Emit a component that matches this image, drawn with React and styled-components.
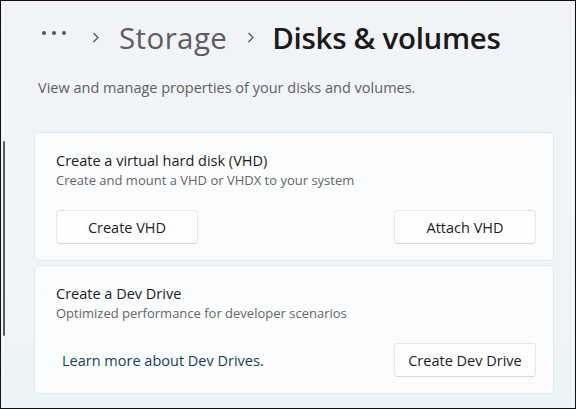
import React from "react";
import styled, { createGlobalStyle } from "styled-components";

const GlobalStyle = createGlobalStyle`
  html, body {
    margin: 0;
    padding: 0;
    background: #f0f3f9;
  }
  * {
    box-sizing: border-box;
  }
`;

const Window = styled.div`
  position: relative;
  width: 576px;
  height: 409px;
  border: 1px solid #111;
  overflow: hidden;
  background: linear-gradient(180deg, #f1f3f8 0%, #f0f4f8 75%, #ecf5f5 100%);
  font-family: "Segoe UI", "Open Sans", "Noto Sans", sans-serif;
  padding: 14px 21px 0 33px;
`;

// 왼쪽 스크롤바
const ScrollThumb = styled.div`
  position: absolute;
  left: 2px;
  top: 140px;
  width: 2px;
  height: 195px;
  border-radius: 1px;
  background: #5c5c5c;
`;

const Breadcrumb = styled.nav`
  display: flex;
  align-items: center;
  height: 44px;
  padding-left: 8px;
`;

const Dots = styled.span`
  display: flex;
  gap: 6px;
  margin-right: 26px;
  margin-top: -8px;
  span {
    width: 4px;
    height: 4px;
    border-radius: 50%;
    background: #555;
  }
`;

const Chevron = styled.svg`
  width: 7px;
  height: 11px;
  margin: 0 ${(p) => p.gap || 20}px 0 0;
  flex: none;
`;

const Crumb = styled.span`
  font-size: 29.5px;
  font-weight: ${(p) => (p.current ? 600 : 500)};
  color: ${(p) => (p.current ? "#1a1a1a" : "#5d5d5d")};
  letter-spacing: ${(p) => (p.current ? "-0.3px" : "0.4px")};
  margin-right: ${(p) => (p.current ? 0 : "20px")};
  white-space: nowrap;
`;

const Description = styled.p`
  margin: 19px 0 0 4px;
  font-size: 14.5px;
  line-height: 20px;
  color: #5f5f5f;
`;

const Cards = styled.div`
  display: flex;
  flex-direction: column;
  gap: 4px;
  margin-top: 34px;
`;

const Card = styled.section`
  background: #fbfcfd;
  border: 1px solid #e3e6ea;
  border-radius: 5px;
  padding: 18px 17px 16px 21px;
`;

const CardTitle = styled.div`
  font-size: 14.5px;
  line-height: 20px;
  color: #1b1b1b;
`;

const CardSub = styled.div`
  font-size: 13px;
  line-height: 16px;
  color: #666;
  margin-top: 1px;
`;

const ActionRow = styled.div`
  display: flex;
  align-items: center;
  justify-content: space-between;
  margin-top: 22px;
`;

const Button = styled.button`
  width: 142px;
  height: 34px;
  background: #fefefe;
  border: 1px solid #e4e6e9;
  border-bottom-color: #d4d6d9;
  border-radius: 4px;
  font-family: inherit;
  font-size: 14.5px;
  color: #1b1b1b;
  padding: 0;
  cursor: pointer;
`;

const Link = styled.a`
  font-size: 14.5px;
  color: #173f54;
  text-decoration: none;
  margin-left: 6px;
`;

const ChevronIcon = ({ gap }) => (
  <Chevron viewBox="0 0 7 11" gap={gap}>
    <path d="M1.5 1 L6 5.5 L1.5 10" fill="none" stroke="#555" strokeWidth="1.3" />
  </Chevron>
);

function App() {
  return (
    <Window>
      <GlobalStyle />
      <ScrollThumb />
      <Breadcrumb>
        <Dots>
          <span />
          <span />
          <span />
        </Dots>
        <ChevronIcon gap={20} />
        <Crumb>Storage</Crumb>
        <ChevronIcon gap={18} />
        <Crumb current>Disks &amp; volumes</Crumb>
      </Breadcrumb>

      <Description>View and manage properties of your disks and volumes.</Description>

      <Cards>
        <Card>
          <CardTitle>Create a virtual hard disk (VHD)</CardTitle>
          <CardSub>Create and mount a VHD or VHDX to your system</CardSub>
          <ActionRow>
            <Button>Create VHD</Button>
            <Button>Attach VHD</Button>
          </ActionRow>
        </Card>
        <Card>
          <CardTitle>Create a Dev Drive</CardTitle>
          <CardSub>Optimized performance for developer scenarios</CardSub>
          <ActionRow>
            <Link href="#">Learn more about Dev Drives.</Link>
            <Button>Create Dev Drive</Button>
          </ActionRow>
        </Card>
      </Cards>
    </Window>
  );
}

export default App;
